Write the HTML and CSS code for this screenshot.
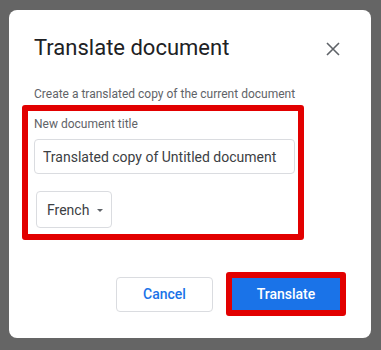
FILE: index.html
```html
<!DOCTYPE html>
<html>
<head>
  <meta charset="UTF-8">
  <title>Translate document</title>
  <link rel="stylesheet" href="styles.css">
</head>
<body>
  <!-- Dialog -->
  <div class="dialog">
    <div class="dialog-head">
      <h1 class="dialog-title">Translate document</h1>
      <button class="close-btn" aria-label="Close">
        <svg width="14" height="14" viewBox="0 0 14 14">
          <path d="M1 1 L13 13 M13 1 L1 13" stroke="#5f6368" stroke-width="1.6" fill="none"/>
        </svg>
      </button>
    </div>

    <p class="dialog-desc">Create a translated copy of the current document</p>

    <!-- Kolom judul dan bahasa -->
    <div class="highlight field-box">
      <label class="field-label" for="doc-title">New document title</label>
      <input class="title-input" id="doc-title" type="text" value="Translated copy of Untitled document">
      <div class="lang-select">
        <span>French</span>
        <span class="caret"></span>
      </div>
    </div>

    <!-- Tombol -->
    <div class="actions">
      <button class="btn btn-cancel">Cancel</button>
      <div class="highlight btn-wrap">
        <button class="btn btn-primary">Translate</button>
      </div>
    </div>
  </div>
</body>
</html>
```

FILE: styles.css
```css
body {
  margin: 0;
  padding: 10px 10px 12px 9px;
  background: #656565;
  font-family: Roboto, "Liberation Sans", Arial, sans-serif;
}

.dialog {
  width: 362px;
  height: 328px;
  box-sizing: border-box;
  background: #fff;
  border-radius: 8px;
  padding: 24px 25px 0 25px;
  display: flex;
  flex-direction: column;
}

.dialog-head {
  display: flex;
  align-items: center;
  justify-content: space-between;
}

.dialog-title {
  margin: 0;
  font-size: 22px;
  line-height: 28px;
  font-weight: 400;
  color: #202124;
}

.close-btn {
  border: none;
  background: none;
  padding: 0;
  margin-right: 6px;
  margin-top: 2px;
  width: 14px;
  height: 14px;
  display: flex;
}

.dialog-desc {
  margin: 24px 0 3px 0;
  font-size: 12px;
  line-height: 16px;
  color: #5f6368;
}

/* Kotak merah penanda */
.highlight {
  border: 6px solid #e20000;
  border-radius: 3px;
}

.field-box {
  width: 282px;
  box-sizing: border-box;
  margin-left: -12px;
  padding: 5px 3px 6px 6px;
  display: flex;
  flex-direction: column;
  align-items: flex-start;
}

.field-label {
  font-size: 12px;
  line-height: 16px;
  color: #5f6368;
}

.title-input {
  margin-top: 7px;
  width: 261px;
  height: 35px;
  box-sizing: border-box;
  border: 1px solid #dadce0;
  border-radius: 4px;
  padding: 0 8px;
  font-family: inherit;
  font-size: 14px;
  color: #3c4043;
  outline: none;
}

.lang-select {
  margin: 17px 0 0 2px;
  width: 76px;
  height: 37px;
  box-sizing: border-box;
  border: 1px solid #dadce0;
  border-radius: 4px;
  padding-left: 10px;
  display: flex;
  align-items: center;
  gap: 8px;
  font-size: 14px;
  color: #3c4043;
}

.caret {
  width: 0;
  height: 0;
  border-left: 3.5px solid transparent;
  border-right: 3.5px solid transparent;
  border-top: 3.5px solid #5f6368;
  margin-top: 1px;
}

.actions {
  margin-top: 32px;
  display: flex;
  align-items: center;
  justify-content: flex-end;
  gap: 13px;
}

.btn {
  font-family: inherit;
  font-size: 14px;
  font-weight: 500;
  border-radius: 4px;
  cursor: pointer;
}

.btn-cancel {
  width: 97px;
  height: 35px;
  background: #fff;
  border: 1px solid #dadce0;
  color: #1a73e8;
}

.btn-wrap {
  display: flex;
}

.btn-primary {
  width: 108px;
  height: 32px;
  border: none;
  border-radius: 0;
  background: #1a73e8;
  color: #fff;
}
```
